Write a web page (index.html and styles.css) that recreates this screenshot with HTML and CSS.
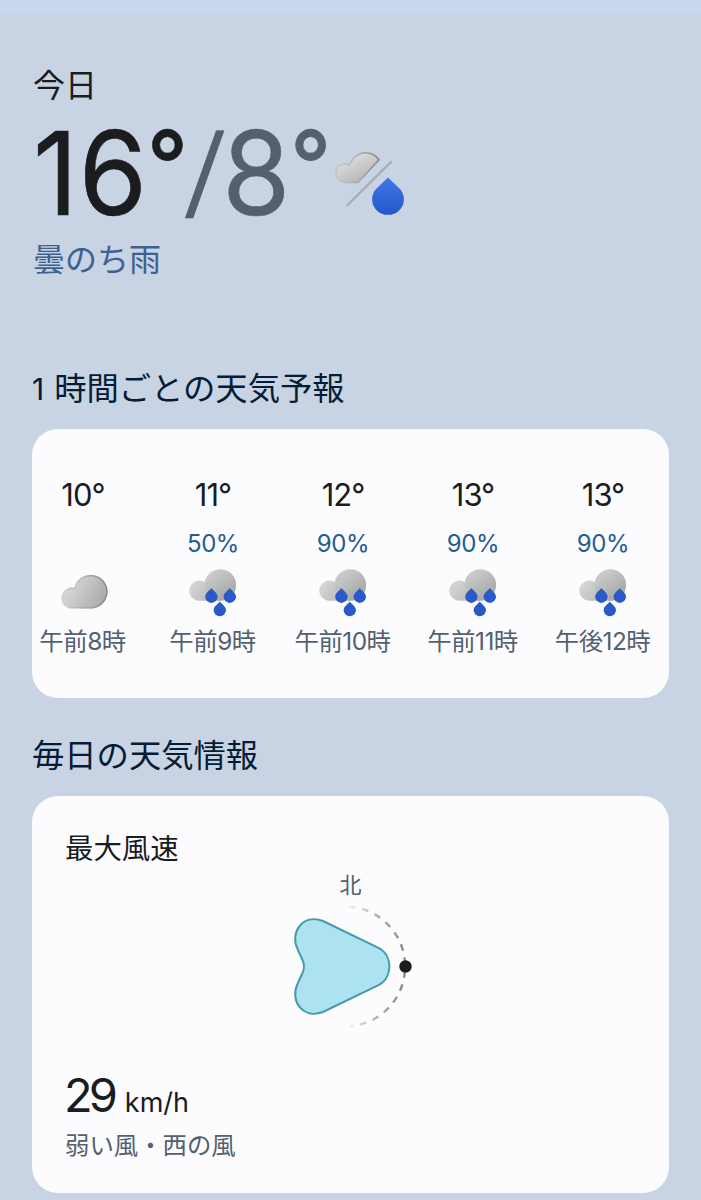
FILE: index.html
```
<!DOCTYPE html>
<html lang="ja">
<head>
    <meta charset="UTF-8">
    <meta name="viewport" content="width=device-width, initial-scale=1.0">
    <title>今日の天気</title>
    <link rel="stylesheet" href="styles.css">
</head>
<body>

    <!-- Shared icons -->
    <svg class="icon-defs" width="0" height="0">
        <defs>
            <linearGradient id="cloud-fill" x1="0" y1="0.3" x2="1" y2="0.7">
                <stop offset="0" stop-color="#dedede"/>
                <stop offset="1" stop-color="#a9a9a9"/>
            </linearGradient>
            <linearGradient id="cloud-edge" x1="0" y1="0" x2="1" y2="0">
                <stop offset="0.1" stop-color="#b5b5b5" stop-opacity="0.5"/>
                <stop offset="1" stop-color="#858585"/>
            </linearGradient>
            <linearGradient id="puff-left" x1="0" y1="0" x2="1" y2="0.5">
                <stop offset="0" stop-color="#dadada"/>
                <stop offset="1" stop-color="#b8b8b8"/>
            </linearGradient>
            <linearGradient id="puff-right" x1="0.1" y1="0" x2="0.8" y2="1">
                <stop offset="0" stop-color="#d2d2d2"/>
                <stop offset="1" stop-color="#a2a2a2"/>
            </linearGradient>
        </defs>
        <symbol id="cloudy" viewBox="0 0 50 50">
            <path d="M11.500 39.900A9.800 9.800 0 1 1 16.800 20.400A16.200 16.200 0 1 1 32.500 39.900Z" fill="url(#cloud-fill)" stroke="url(#cloud-edge)" stroke-width="1.500"/>
        </symbol>
        <symbol id="rain" viewBox="0 0 50 50">
            <path d="M11.400 32.800A10.100 10.100 0 1 1 18.500 15.500L33 32.800Z" fill="url(#puff-left)"/>
            <circle cx="32.300" cy="17" r="15.800" fill="url(#puff-right)"/>
            <g fill="#2a59c9">
                <path id="drop" d="M23.400 20C24.500 22 29.600 24.800 29.600 28.700A6.200 6.200 0 0 1 17.200 28.700C17.200 24.800 22.300 22 23.400 20Z"/>
                <use href="#drop" x="18.400"/>
                <use href="#drop" x="8.400" y="13.400"/>
            </g>
        </symbol>
    </svg>

    <div class="top-strip"></div>

    <!-- Today -->
    <section class="today">
        <h1>今日</h1>
        <div class="today-temp">
            <div class="digits"><span class="high"><span class="one">1</span>6<span class="deg">°</span></span><span class="low"><span class="slash">/</span>8<span class="deg">°</span></span></div>
            <svg class="today-icon" viewBox="0 0 74 70">
                <defs>
                    <linearGradient id="today-cloud" x1="0.2" y1="0.1" x2="0.8" y2="0.9">
                        <stop offset="0" stop-color="#e2e2e2"/>
                        <stop offset="1" stop-color="#b3b3b3"/>
                    </linearGradient>
                    <linearGradient id="today-drop" x1="0" y1="0" x2="0" y2="1">
                        <stop offset="0" stop-color="#3f78ea"/>
                        <stop offset="1" stop-color="#2455c8"/>
                    </linearGradient>
                </defs>
                <path d="M15 32.400A9.200 9.200 0 1 1 19.500 15.200C23 6.500 30 2.700 35.500 2.700C41 2.700 45.500 5 49 9.700L28 32.400Z" fill="url(#today-cloud)" stroke="url(#cloud-edge)" stroke-width="1.500"/>
                <path d="M17.500 55L61 12" stroke="#a9acb1" stroke-width="2.300" stroke-linecap="round"/>
                <path d="M58 27.600L69.500 38.500A15.900 15.600 0 1 1 46.500 38.500Z" fill="url(#today-drop)"/>
            </svg>
        </div>
        <p class="condition">曇のち雨</p>
    </section>

    <!-- Hourly forecast -->
    <h2><span class="num">1</span>時間ごとの天気予報</h2>
    <div class="card hourly">
        <div class="hour">
            <div class="temp">10°</div>
            <div class="chance"></div>
            <svg class="icon"><use href="#cloudy"/></svg>
            <div class="time">午前8時</div>
        </div>
        <div class="hour">
            <div class="temp">11°</div>
            <div class="chance">50%</div>
            <svg class="icon"><use href="#rain"/></svg>
            <div class="time">午前9時</div>
        </div>
        <div class="hour">
            <div class="temp">12°</div>
            <div class="chance">90%</div>
            <svg class="icon"><use href="#rain"/></svg>
            <div class="time">午前10時</div>
        </div>
        <div class="hour">
            <div class="temp">13°</div>
            <div class="chance">90%</div>
            <svg class="icon"><use href="#rain"/></svg>
            <div class="time">午前11時</div>
        </div>
        <div class="hour">
            <div class="temp">13°</div>
            <div class="chance">90%</div>
            <svg class="icon"><use href="#rain"/></svg>
            <div class="time">午後12時</div>
        </div>
    </div>

    <!-- Daily details -->
    <h2 class="daily-title">毎日の天気情報</h2>
    <div class="card wind">
        <h3>最大風速</h3>
        <div class="compass">
            <div class="north">北</div>
            <svg class="dial" viewBox="0 0.500 140 140">
                <defs>
                    <linearGradient id="arc-fade" gradientUnits="userSpaceOnUse" x1="66" y1="0" x2="122" y2="0">
                        <stop offset="0" stop-color="#999" stop-opacity="0.1"/>
                        <stop offset="0.6" stop-color="#999" stop-opacity="0.8"/>
                        <stop offset="1" stop-color="#8c8c8c"/>
                    </linearGradient>
                </defs>
                <path d="M70 7.200A60 60 0 0 1 70 126.800" fill="none" stroke="url(#arc-fade)" stroke-width="2.400" stroke-dasharray="6.800 6.800" stroke-dashoffset="1.500"/>
                <path d="M43 21.500L98.500 48.300C113 55.500 113 78.500 98.500 85.700L43 112.500C23 120 9.500 101.500 17.500 84.500L22.500 73.500Q25.500 67 22.500 60.500L17.500 49.500C9.500 32.500 23 14 43 21.500Z" fill="#ade2f0" stroke="#469ba8" stroke-width="2"/>
                <circle cx="125.500" cy="67" r="6.200" fill="#1a1c1e"/>
            </svg>
        </div>
        <div class="speed"><span class="value">29</span><span class="unit">km/h</span></div>
        <p class="wind-desc">弱い風・西の風</p>
    </div>

</body>
</html>
```
FILE: styles.css
```
* {
    box-sizing: border-box;
}
body {
    font-family: Inter, "Noto Sans CJK JP", sans-serif;
    margin: 0;
    padding: 0 32px;
    height: 1200px;
    overflow: hidden;
    background-color: #c8d3e3;
    color: #1a1c1e;
}
h1, h2, h3, p {
    margin: 0;
    font-weight: 400;
}
.icon-defs {
    display: block;
}
.top-strip {
    height: 13px;
    margin: 0 -32px;
    background-color: #cad7ec;
}
.today {
    height: 352px;
    padding-top: 49px;
}
.today h1 {
    padding-left: 1px;
    font-size: 32px;
    line-height: 48px;
}
.today-temp {
    display: flex;
    height: 126px;
}
.digits {
    width: 300px;
    line-height: 126px;
    font-size: 116px;
    white-space: nowrap;
    transform: scaleX(0.95);
    transform-origin: 0 0;
    -webkit-text-stroke: 0.6px;
}
.one {
    margin-left: 1px;
    letter-spacing: 1px;
}
.deg {
    font-size: 94px;
    font-weight: 500;
    line-height: 0;
    vertical-align: 17px;
}
.slash {
    display: inline-block;
    font-size: 100px;
    line-height: 0;
    vertical-align: 8px;
    transform: skewX(-6deg);
}
.low {
    color: #55606f;
}
.today-icon {
    width: 74px;
    height: 70px;
    margin-top: 40px;
    margin-left: -2px;
}
.condition {
    padding-left: 1px;
    font-size: 32px;
    line-height: 48px;
    color: #3d6290;
}
h2 {
    font-size: 32.3px;
    line-height: 48px;
    color: #041c35;
}
.num {
    margin-right: 10px;
    font-size: 30px;
}
.card {
    background-color: #fcfcff;
    border-radius: 26px;
    width: 637px;
}
.hourly {
    display: flex;
    height: 269px;
    margin-top: 16px;
    padding-top: 45px;
    overflow: hidden;
}
.hour {
    flex: 0 0 130px;
    display: flex;
    flex-direction: column;
    align-items: center;
}
.hour:first-child {
    margin-left: -14px;
}
.temp {
    font-size: 31px;
    line-height: 42px;
    letter-spacing: -1px;
}
.chance {
    height: 32px;
    margin-top: 12px;
    font-size: 24px;
    line-height: 32px;
    letter-spacing: -0.4px;
    color: #235d92;
}
.icon {
    width: 50px;
    height: 50px;
    margin-top: 8px;
}
.time {
    margin-top: 4px;
    margin-right: 1px;
    font-size: 24.4px;
    line-height: 38px;
    letter-spacing: -0.5px;
    color: #53606e;
    white-space: nowrap;
}
.daily-title {
    margin-top: 34px;
}
.wind {
    height: 397px;
    margin-top: 16px;
    padding: 32px 33px;
}
.wind h3 {
    font-size: 28.4px;
    line-height: 42px;
}
.compass {
    display: flex;
    flex-direction: column;
    align-items: center;
    height: 195px;
}
.north {
    font-size: 22px;
    line-height: 30px;
    color: #53606e;
}
.dial {
    width: 140px;
    height: 140px;
    margin-right: 2px;
}
.speed {
    display: flex;
    align-items: baseline;
    gap: 11px;
    margin-left: -1px;
    line-height: 60px;
}
.value {
    font-size: 47px;
    letter-spacing: -4px;
}
.unit {
    font-size: 27px;
}
.wind-desc {
    margin-top: -6px;
    font-size: 24.4px;
    line-height: 36px;
    color: #53606e;
}
```
